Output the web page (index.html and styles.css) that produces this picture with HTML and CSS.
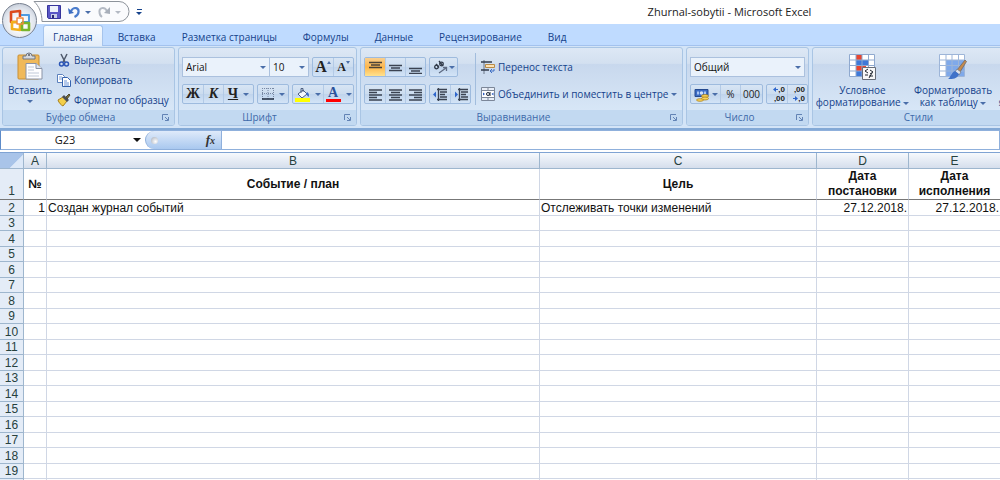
FILE: index.html
```html
<!DOCTYPE html>
<html lang="ru">
<head>
  <meta charset="UTF-8">
  <meta name="viewport" content="width=device-width, initial-scale=1">
  <title>Zhurnal-sobytii - Microsoft Excel</title>
  <link rel="stylesheet" href="styles.css">
</head>
<body>
  <header class="titlebar">
    <button type="button" class="office-btn" aria-label="Office">
      <svg width="24" height="24" viewBox="0 0 24 24" fill="none" stroke-linejoin="round">
        <path d="M9 13H3V3l9-1v6" stroke="#dc4a1c" stroke-width="2.600"/>
        <path d="M13 6h8v7h-7" stroke="#4f9be0" stroke-width="2"/>
        <path d="M9 13H4v7l8 1v-6" stroke="#f3b01c" stroke-width="2.600"/>
        <path d="M14 14h7v7h-7z" stroke="#78b52c" stroke-width="2.600"/>
        <path d="M9 9h6v6H9z" stroke="#f08a3c" stroke-width="1.500"/>
      </svg>
    </button>
    <div class="quick">
      <svg class="quick-shape" width="98" height="22" viewBox="0 0 98 22">
        <path d="M1 .5H86a10 10 0 0 1 0 20H9C9 12 6 5 1 .5z" fill="#fafbfd" stroke="#8d939b"/>
      </svg>
      <button type="button" aria-label="Сохранить">
        <svg width="14" height="14" viewBox="0 0 14 14">
          <path d="M.5.500h13v13h-12l-1-1z" fill="#5a57c6" stroke="#37359b"/>
          <path d="M3 1h8v6H3z" fill="#eef2fb"/>
          <path d="M4 9h6v4H4z" fill="#c9cfe6"/>
          <path d="M5 10h2v3H5z" fill="#2a2875"/>
        </svg>
      </button>
      <button type="button" class="undo" aria-label="Отменить">
        <svg width="12" height="12" viewBox="0 0 12 12" fill="none">
          <path d="M3 5c3-5 8-3 7.500 1 0 2-2 4-4 5" stroke="#4a7ccc" stroke-width="2.200"/>
          <path d="M0 2l1 6 5-1z" fill="#3c6cc0"/>
        </svg>
      </button>
      <span class="caret"></span>
      <button type="button" class="redo" aria-label="Вернуть" disabled>
        <svg width="12" height="12" viewBox="0 0 12 12" fill="none">
          <path d="M9 5C6 0 1 2 1.500 6c0 2 1 4 2.500 5" stroke="#b4bac4" stroke-width="2"/>
          <path d="M12 1v7l-6-1z" fill="#a8afba"/>
        </svg>
      </button>
      <span class="caret caret-off"></span>
    </div>
    <button type="button" class="customize" aria-label="Настройка панели"><span class="caret"></span></button>
    <h1 class="title">Zhurnal-sobytii - Microsoft Excel</h1>
  </header>

  <nav class="tabs">
    <a href="#" class="tab active">Главная</a>
    <a href="#" class="tab">Вставка</a>
    <a href="#" class="tab">Разметка страницы</a>
    <a href="#" class="tab">Формулы</a>
    <a href="#" class="tab">Данные</a>
    <a href="#" class="tab">Рецензирование</a>
    <a href="#" class="tab">Вид</a>
  </nav>

  <div class="ribbon">
    <!-- Clipboard -->
    <section class="group clipboard">
      <div class="group-body">
        <button type="button" class="big">
          <svg width="26" height="28" viewBox="0 0 26 28">
            <rect x="1" y="3" width="21" height="24" rx="1" fill="#f0b95a" stroke="#c98f33"/>
            <path d="M6 7V4h3a3 3 0 0 1 6 0h3v3z" fill="#d5d8de" stroke="#6f7683"/>
            <circle cx="12" cy="3" r="1" fill="#555c68"/>
            <path d="M9 11.500h10l6 5V27H9z" fill="#fdfdff" stroke="#8a93a6"/>
            <path d="M19 11.500v5h6" fill="#dfe5ef" stroke="#8a93a6"/>
            <path d="M11 15h6M11 18h6M11 21h11M11 24h11" stroke="#c0c9d8"/>
          </svg>
          <span>Вставить</span>
          <span class="caret"></span>
        </button>
        <div class="small-list">
          <button type="button" class="small">
            <svg width="14" height="14" viewBox="0 0 14 14" fill="none">
              <path d="M4 1l4 8M10 1L6 9" stroke="#4f5a6b" stroke-width="1.500"/>
              <circle cx="4.500" cy="11" r="2" stroke="#2b55b5" stroke-width="1.500"/>
              <circle cx="9.500" cy="11" r="2" stroke="#2b55b5" stroke-width="1.500"/>
            </svg>
            Вырезать
          </button>
          <button type="button" class="small">
            <svg width="14" height="14" viewBox="0 0 14 14">
              <path d="M.5 1.500h5l2 2v6h-7z" fill="#fff" stroke="#5b80bd"/>
              <path d="M2 4h3M2 6h3" stroke="#7ea0d8"/>
              <path d="M5.500 4.500h5l3 3v6h-8z" fill="#fff" stroke="#3563ae"/>
              <path d="M7 8h3M7 10h5M7 12h5" stroke="#6b93d6"/>
            </svg>
            Копировать
          </button>
          <button type="button" class="small">
            <svg width="14" height="14" viewBox="0 0 14 14">
              <path d="M1 7l5-3 4 4-4 5c-2-1-4-3-5-6z" fill="#f3cf4a" stroke="#a8801c"/>
              <path d="M5 4l2-2 5 5-2 2z" fill="#4a4f58"/>
              <path d="M9 4l3-3 1 1-3 4z" fill="#7d7240" stroke="#4f4a30"/>
            </svg>
            Формат по образцу
          </button>
        </div>
      </div>
      <div class="group-label">Буфер обмена
        <svg class="launcher" width="7" height="7" viewBox="0 0 7 7"><path d="M.5 6V.500H6M3 3l3 3M6.500 3v3.500H3" fill="none" stroke="#6283b5"/></svg>
      </div>
    </section>

    <!-- Font -->
    <section class="group font">
      <div class="group-body rows">
        <div class="row">
          <div class="combo">
            <label class="pick pick-font"><select aria-label="Шрифт"><option>Arial</option></select><span class="caret"></span></label>
            <label class="pick pick-size"><select aria-label="Размер"><option>10</option></select><span class="caret"></span></label>
          </div>
          <div class="set">
            <button type="button" class="serif grow" aria-label="Увеличить размер">A<span class="caret caret-up"></span></button>
            <button type="button" class="serif shrink" aria-label="Уменьшить размер">A<span class="caret"></span></button>
          </div>
        </div>
        <div class="row">
          <div class="set">
            <button type="button" class="serif">Ж</button>
            <button type="button" class="serif italic">К</button>
            <button type="button" class="serif wide"><u>Ч</u><span class="caret"></span></button>
          </div>
          <div class="set">
            <button type="button" class="wide" aria-label="Границы">
              <svg width="12" height="12" viewBox="0 0 12 12" fill="none">
                <path d="M.5 0v11M6 0v11M11.500 0v11M0 .5h12M0 5.500h12" stroke="#7787a3" stroke-dasharray="1 1"/>
                <path d="M0 11h12" stroke="#1e2a3e" stroke-width="1.500"/>
              </svg>
              <span class="caret"></span>
            </button>
          </div>
          <div class="set">
            <button type="button" class="wide" aria-label="Цвет заливки">
              <svg width="15" height="15" viewBox="0 0 15 15">
                <path d="M3 7l5-4 4 4-5 4z" fill="#f5f8fd" stroke="#4c5f80"/>
                <path d="M6 6V1.500h2V5" fill="none" stroke="#4c5f80"/>
                <path d="M12 5c2 1 2.500 3 1.500 5-1-1-1.500-2-2.500-3z" fill="#3e6cc2"/>
                <path d="M0 11h15v4H0z" fill="#ff0"/>
              </svg>
              <span class="caret"></span>
            </button>
            <button type="button" class="wide" aria-label="Цвет текста">
              <span class="serif font-color">A</span>
              <span class="caret"></span>
            </button>
          </div>
        </div>
      </div>
      <div class="group-label">Шрифт
        <svg class="launcher" width="7" height="7" viewBox="0 0 7 7"><path d="M.5 6V.500H6M3 3l3 3M6.500 3v3.500H3" fill="none" stroke="#6283b5"/></svg>
      </div>
    </section>

    <!-- Alignment -->
    <section class="group align">
      <div class="group-body">
        <div class="rows">
          <div class="row">
            <div class="set">
              <button type="button" class="on" aria-label="По верхнему краю"><svg width="13" height="13" viewBox="0 0 13 13"><path d="M0 1.500h13M2 4h9M0 6.500h13" stroke="#4a4238" stroke-width="1.400"/></svg></button>
              <button type="button" aria-label="По середине"><svg width="13" height="13" viewBox="0 0 13 13"><path d="M0 4.500h13M2 7h9M0 9.500h13" stroke="#3b4352" stroke-width="1.400"/></svg></button>
              <button type="button" aria-label="По нижнему краю"><svg width="13" height="13" viewBox="0 0 13 13"><path d="M0 7.500h13M2 10h9M0 12.500h13" stroke="#3b4352" stroke-width="1.400"/></svg></button>
            </div>
            <div class="set">
              <button type="button" class="orient" aria-label="Ориентация">
                <svg width="15" height="14" viewBox="0 0 15 14" fill="none" stroke="#2f3847" stroke-width="1.300">
                  <circle cx="3.500" cy="7" r="1.800"/><path d="M3 4l3 3.500M6 1l4 5"/><circle cx="8.500" cy="4" r="1.800"/>
                  <path d="M6 13l7-5M13.500 11V7.500H10" stroke="#5f6c83"/>
                </svg>
                <span class="caret"></span>
              </button>
            </div>
          </div>
          <div class="row">
            <div class="set">
              <button type="button" aria-label="По левому краю"><svg width="13" height="13" viewBox="0 0 13 13"><path d="M0 2h13M0 4.500h8M0 7h13M0 9.500h8M0 12h13" stroke="#3b4352" stroke-width="1.400"/></svg></button>
              <button type="button" aria-label="По центру"><svg width="13" height="13" viewBox="0 0 13 13"><path d="M0 2h13M2 4.500h9M0 7h13M2 9.500h9M0 12h13" stroke="#3b4352" stroke-width="1.400"/></svg></button>
              <button type="button" aria-label="По правому краю"><svg width="13" height="13" viewBox="0 0 13 13"><path d="M0 2h13M5 4.500h8M0 7h13M5 9.500h8M0 12h13" stroke="#3b4352" stroke-width="1.400"/></svg></button>
            </div>
            <div class="set">
              <button type="button" aria-label="Уменьшить отступ"><svg width="14" height="13" viewBox="0 0 14 13"><path d="M4 1.500h10M7 4h7M7 6.500h5M7 9h7M4 11.500h10M5.500 0v13" stroke="#3b4352" stroke-width="1.300"/><path d="M0 6.500l3-3v6z" fill="#2f66cc"/></svg></button>
              <button type="button" aria-label="Увеличить отступ"><svg width="14" height="13" viewBox="0 0 14 13"><path d="M4 1.500h10M7 4h7M7 6.500h5M7 9h7M4 11.500h10M5.500 0v13" stroke="#3b4352" stroke-width="1.300"/><path d="M4 6.500l-3-3v6z" fill="#2f66cc"/></svg></button>
            </div>
          </div>
        </div>
        <div class="divider"></div>
        <div class="rows">
          <button type="button" class="small">
            <svg width="14" height="14" viewBox="0 0 14 14" fill="none">
              <path d="M3 0v14" stroke="#6b7688"/>
              <path d="M0 2h11M0 10h8" stroke="#333d4e" stroke-width="1.500"/>
              <path d="M4.500 4.500h9v3h-9z" fill="#fbe1b5" stroke="#b98a45"/>
              <path d="M13 9v2h-3M11 9l-2 2 2 2" stroke="#3f6fc4"/>
            </svg>
            Перенос текста
          </button>
          <button type="button" class="small">
            <svg width="14" height="14" viewBox="0 0 14 14" fill="none">
              <path d="M.5.500h13v13H.500z" fill="#e8eef8" stroke="#7c8799"/>
              <path d="M0 3.500h14M0 10.500h14M7 0v3M7 11v3" stroke="#7c8799"/>
              <path d="M1 4h12v6H1z" fill="#fff"/>
              <circle cx="7" cy="7" r="1.500" stroke="#222c3d"/><path d="M9 5v4" stroke="#222c3d"/>
              <path d="M4 7L2 5.500v3zM10.500 7l2-1.500v3z" fill="#2b5cc0"/>
            </svg>
            Объединить и поместить в центре
            <span class="caret"></span>
          </button>
        </div>
      </div>
      <div class="group-label">Выравнивание
        <svg class="launcher" width="7" height="7" viewBox="0 0 7 7"><path d="M.5 6V.500H6M3 3l3 3M6.500 3v3.500H3" fill="none" stroke="#6283b5"/></svg>
      </div>
    </section>

    <!-- Number -->
    <section class="group number">
      <div class="group-body rows">
        <div class="row">
          <label class="pick"><select aria-label="Числовой формат"><option>Общий</option></select><span class="caret"></span></label>
        </div>
        <div class="row">
          <div class="set">
            <button type="button" class="money" aria-label="Денежный формат">
              <svg width="15" height="15" viewBox="0 0 15 15">
                <path d="M1 2.500h13v7H1z" fill="#3a6bc4" stroke="#24498f"/>
                <path d="M3 4.500h2v3H3zM10 4.500h2v3h-2z" fill="#a9c6f5"/>
                <circle cx="7.500" cy="6" r="1.800" fill="#cfe0fb"/>
                <ellipse cx="11" cy="9" rx="3.500" ry="1.500" fill="#f8d35b" stroke="#a67a17" stroke-width=".7"/>
                <ellipse cx="11" cy="11.500" rx="3.500" ry="1.500" fill="#f8d35b" stroke="#a67a17" stroke-width=".7"/>
                <ellipse cx="6" cy="13" rx="3.500" ry="1.300" fill="#f8d35b" stroke="#a67a17" stroke-width=".7"/>
              </svg>
              <span class="caret"></span>
            </button>
            <button type="button">%</button>
            <button type="button" class="thousands">000</button>
          </div>
          <div class="set">
            <button type="button" class="digits">
              <span><svg width="5" height="5" viewBox="0 0 5 5"><path d="M0 2.500L3 0v2h2v1H3v2z" fill="#2f66cc"/></svg>,0</span>
              <span>,00</span>
            </button>
            <button type="button" class="digits">
              <span>,00</span>
              <span><svg width="5" height="5" viewBox="0 0 5 5"><path d="M5 2.500L2 0v2H0v1h2v2z" fill="#2f66cc"/></svg>,0</span>
            </button>
          </div>
        </div>
      </div>
      <div class="group-label">Число
        <svg class="launcher" width="7" height="7" viewBox="0 0 7 7"><path d="M.5 6V.500H6M3 3l3 3M6.500 3v3.500H3" fill="none" stroke="#6283b5"/></svg>
      </div>
    </section>

    <!-- Styles -->
    <section class="group styles">
      <div class="group-body">
        <button type="button" class="big">
          <svg width="27" height="28" viewBox="0 0 27 28">
            <path d="M.5 2.500h25v22H.500z" fill="#fff"/>
            <path d="M7 3h6v5H7zM7 14h10v5H7z" fill="#e8452f"/>
            <path d="M7 8h12v6H7zM7 19h6v6H7z" fill="#3f79d8"/>
            <path d="M.5 2.500h25v22H.500zM0 8h26M0 13.500h26M0 19h26M7 2v23M13 2v23M19.500 2v23" fill="none" stroke="#8fa9cf"/>
            <path d="M13.500 15.500h13v12h-13z" fill="#f8f8f8" stroke="#666d78"/>
            <path d="M19 17l-3 2 3 2M16 23h3M21 18l3 2-3 2M20 24h4M23 21l-3 5" fill="none" stroke="#20262f"/>
          </svg>
          <span>Условное<br>форматирование <span class="caret"></span></span>
        </button>
        <button type="button" class="big">
          <svg width="28" height="28" viewBox="0 0 28 28">
            <path d="M.5 2.500h25v22H.500z" fill="#fff"/>
            <path d="M7 8h18v16H7z" fill="#7fa9ea"/>
            <path d="M.5 2.500h25v22H.500zM0 8h26M0 13.500h26M0 19h26M7 2v23M13 2v23M19.500 2v23" fill="none" stroke="#9db5d8"/>
            <path d="M26 8l1.500 1.500L21 20l-3-2z" fill="#c58a4c" stroke="#6e6a68" stroke-width=".8"/>
            <path d="M18 17l4 3-2 3-4-3z" fill="#dfe3ea" stroke="#747b88" stroke-width=".8"/>
            <path d="M16 19l4 3c-2 5-6 5-11 5 3-2 3-6 7-8z" fill="#3f72c9"/>
          </svg>
          <span>Форматировать<br>как таблицу <span class="caret"></span></span>
        </button>
        <button type="button" class="big">
          <svg width="26" height="28" viewBox="0 0 26 28"><path d="M4 3h21v22H4z" fill="#7fa9ea"/></svg>
          <span>Стили<br>ячеек <span class="caret"></span></span>
        </button>
      </div>
      <div class="group-label">Стили</div>
    </section>
  </div>

  <div class="formula-bar">
    <label class="name-box"><input type="text" value="G23" aria-label="Имя"><span class="caret"></span></label>
    <div class="fx"><span class="knob"></span><button type="button"><i>f<sub>x</sub></i></button></div>
    <input type="text" class="formula" aria-label="Строка формул">
  </div>

  <main class="sheet">
    <table>
      <colgroup>
        <col class="col-head"><col class="col-a"><col class="col-b"><col><col class="col-date"><col class="col-last">
      </colgroup>
      <thead>
        <tr><th class="corner"></th><th>A</th><th>B</th><th>C</th><th>D</th><th>E</th></tr>
      </thead>
      <tbody>
        <tr class="heading"><th>1</th><td>№</td><td>Событие / план</td><td>Цель</td><td>Дата постановки</td><td>Дата исполнения</td></tr>
        <tr><th>2</th><td class="right">1</td><td>Создан журнал событий</td><td>Отслеживать точки изменений</td><td class="right">27.12.2018.</td><td class="right">27.12.2018.</td></tr>
        <tr><th>3</th><td></td><td></td><td></td><td></td><td></td></tr>
        <tr><th>4</th><td></td><td></td><td></td><td></td><td></td></tr>
        <tr><th>5</th><td></td><td></td><td></td><td></td><td></td></tr>
        <tr><th>6</th><td></td><td></td><td></td><td></td><td></td></tr>
        <tr><th>7</th><td></td><td></td><td></td><td></td><td></td></tr>
        <tr><th>8</th><td></td><td></td><td></td><td></td><td></td></tr>
        <tr><th>9</th><td></td><td></td><td></td><td></td><td></td></tr>
        <tr><th>10</th><td></td><td></td><td></td><td></td><td></td></tr>
        <tr><th>11</th><td></td><td></td><td></td><td></td><td></td></tr>
        <tr><th>12</th><td></td><td></td><td></td><td></td><td></td></tr>
        <tr><th>13</th><td></td><td></td><td></td><td></td><td></td></tr>
        <tr><th>14</th><td></td><td></td><td></td><td></td><td></td></tr>
        <tr><th>15</th><td></td><td></td><td></td><td></td><td></td></tr>
        <tr><th>16</th><td></td><td></td><td></td><td></td><td></td></tr>
        <tr><th>17</th><td></td><td></td><td></td><td></td><td></td></tr>
        <tr><th>18</th><td></td><td></td><td></td><td></td><td></td></tr>
        <tr><th>19</th><td></td><td></td><td></td><td></td><td></td></tr>
        <tr><th></th><td></td><td></td><td></td><td></td><td></td></tr>
      </tbody>
    </table>
  </main>
</body>
</html>
```
FILE: styles.css
```css
* {
  box-sizing: border-box;
}
body {
  margin: 0;
  height: 100vh;
  display: flex;
  flex-direction: column;
  overflow: hidden;
  background: #fff;
  color: #15428b;
  font: 500 10px/12px "Open Sans", "Noto Sans", sans-serif;
}
button, input, select {
  margin: 0;
  padding: 0;
  border: 0;
  background: none;
  color: inherit;
  font: inherit;
}
button {
  display: flex;
  align-items: center;
  justify-content: center;
  white-space: nowrap;
}
svg {
  flex: none;
  display: block;
}
.caret {
  display: inline-block;
  flex: none;
  border: 3px solid transparent;
  border-top-color: #4a6ea9;
  border-bottom: 0;
}
.caret-up {
  border-top: 0;
  border-bottom: 3px solid #4a6ea9;
}
.caret-off {
  border-top-color: #b4bac4;
}

/* title bar */
.titlebar {
  position: relative;
  display: flex;
  align-items: center;
  height: 24px;
  padding-left: 33px;
}
.office-btn {
  position: absolute;
  z-index: 2;
  left: 2px;
  top: 3px;
  width: 35px;
  height: 35px;
  border: 1px solid #77808f;
  border-radius: 50%;
  background: radial-gradient(circle at 50% 60%, #fff 20%, #dfe4ec 60%, #a9b3c4);
}
.quick {
  position: relative;
  display: flex;
  align-items: center;
  width: 98px;
  height: 22px;
  padding-left: 14px;
}
.quick-shape {
  position: absolute;
  left: 0;
  top: 0;
}
.quick button, .quick .caret {
  position: relative;
}
.undo, .redo {
  margin: 0 5px 0 7px;
}
.customize {
  width: 16px;
  flex-direction: column;
  gap: 2px;
}
.customize::before {
  content: "";
  width: 5px;
  height: 1px;
  background: #15428b;
}
.customize .caret {
  border-top-color: #15428b;
}
.title {
  flex: 1;
  margin: 0;
  padding-left: 312px;
  text-align: center;
  color: #222;
  font-size: 11px;
  font-weight: normal;
}

/* tabs */
.tabs {
  display: flex;
  height: 22px;
  padding-left: 43px;
  background: #bfdbff;
  border-bottom: 1px solid #a3c2ee;
}
.tab {
  padding: 6px 12px 0;
  border: 1px solid transparent;
  border-bottom: 0;
  color: #15428b;
  text-decoration: none;
}
.tab.active {
  margin: 1px 2px -1px 0;
  padding: 5px 9px 0;
  border-color: #a6c4ec;
  border-radius: 3px 3px 0 0;
  background: linear-gradient(#f5faff, #e3edf9);
}

/* ribbon */
.ribbon {
  display: flex;
  gap: 3px;
  padding: 1px 0 2px 2px;
  overflow: hidden;
  background: #d3e4f7;
  border-bottom: 2px solid #83a9d6;
}
.group {
  flex: none;
  border: 1px solid #a9c5e4;
  border-radius: 3px;
  background: linear-gradient(#dde8f5, #d3e0f0 20%, #c8d8ed 21%, #dcebfa);
  overflow: hidden;
}
.clipboard {
  width: 173px;
}
.font {
  width: 179px;
}
.align {
  width: 323px;
}
.number {
  width: 123px;
}
.styles {
  width: 229px;
}
.group-body {
  display: flex;
  height: 62px;
  padding: 0 3px;
}
.rows {
  display: flex;
  flex-direction: column;
  gap: 7px;
  padding-top: 9px;
}
.row {
  display: flex;
  align-items: center;
  gap: 3px;
  height: 20px;
}
.group-label {
  position: relative;
  height: 15px;
  padding: 1px 16px 0 0;
  background: #c2d9f1;
  color: #3e6aaa;
  text-align: center;
}
.launcher {
  position: absolute;
  right: 5px;
  top: 4px;
}
.big {
  flex-direction: column;
  justify-content: flex-start;
  min-width: 48px;
  padding-top: 4px;
  gap: 4px;
}
.styles .big {
  min-width: 88px;
}
.styles .big:last-child {
  min-width: 40px;
}
.big .caret {
  vertical-align: middle;
}
.small-list {
  display: flex;
  flex-direction: column;
  padding: 2px 0 0 3px;
}
.small {
  justify-content: flex-start;
  gap: 3px;
  height: 20px;
}
.set {
  display: flex;
  height: 20px;
  border: 1px solid #9ebbde;
  border-radius: 2px;
  background: linear-gradient(#d8e5f4, #cbdcef 50%, #c0d4ec 51%, #d3e4f7);
}
.set button {
  width: 20px;
}
.set button + button {
  border-left: 1px solid #b3cae6;
}
.set .wide {
  width: 30px;
  gap: 5px;
}
.set .on {
  background: linear-gradient(#f9cf8e, #fdb64c 50%, #ffe28f);
}
.set .orient {
  width: 27px;
  gap: 1px;
}
.divider {
  width: 1px;
  height: 52px;
  margin: 5px 5px 0 4px;
  background: #a2bddd;
}
.combo {
  display: flex;
}
.pick {
  flex: 1;
  display: flex;
  align-items: center;
  height: 20px;
  padding: 0 3px;
  border: 1px solid #abc1de;
  background: #eaf2fb;
  color: #111;
}
.pick select {
  flex: 1;
  min-width: 0;
  appearance: none;
}
.pick-font {
  flex: none;
  width: 88px;
}
.pick-size {
  flex: none;
  width: 39px;
  border-left: 0;
}
.serif {
  color: #222;
  font-family: "Liberation Serif", serif;
  font-size: 14px;
  font-weight: bold;
}
.italic {
  font-style: italic;
}
.grow {
  font-size: 16px;
}
.shrink {
  font-size: 12px;
}
.grow .caret, .shrink .caret {
  margin-bottom: 9px;
  border-left-width: 2px;
  border-right-width: 2px;
}
.font-color {
  width: 15px;
  color: #2c529b;
  border-bottom: 3px solid #f00;
}
.number .set {
  color: #222;
}
.set .money {
  width: 29px;
  gap: 3px;
}
.set .thousands {
  width: 22px;
}
.set .digits {
  flex-direction: column;
  align-items: flex-end;
  padding-right: 2px;
  font: bold 8px/9px "Liberation Sans", Arial, sans-serif;
}
.digits span {
  display: flex;
  align-items: center;
}

/* formula bar */
.formula-bar {
  display: flex;
  height: 20px;
  border: 1px solid #8fb0dc;
  border-left-color: #5d8bc9;
  background: #fff;
}
.name-box {
  display: flex;
  align-items: center;
  width: 144px;
  padding-right: 4px;
  color: #111;
  font-size: 11px;
}
.name-box input {
  flex: 1;
  min-width: 0;
  padding-right: 4px;
  text-align: center;
}
.name-box .caret {
  border-width: 4px;
  border-bottom: 0;
  border-top-color: #111;
}
.fx {
  display: flex;
  align-items: center;
  justify-content: space-between;
  width: 77px;
  padding: 0 6px 0 5px;
  border: 1px solid #8fb0dc;
  border-width: 0 1px;
  border-radius: 10px 0 0 10px;
  background: linear-gradient(#dfeafa, #a9c8ef);
  color: #333;
  font: bold 13px "Liberation Serif", serif;
}
.fx sub {
  font-size: 10px;
  vertical-align: baseline;
}
.knob {
  width: 7px;
  height: 7px;
  border-radius: 50%;
  background: radial-gradient(circle at 65% 65%, #fff, #a5acb8);
}
.formula {
  flex: 1;
  min-width: 0;
}

/* worksheet */
.sheet {
  flex: 1;
  min-height: 0;
  margin-top: 2px;
  overflow: hidden;
  border-top: 1px solid #7fa3d3;
  color: #111;
  font: 12px/14px "Liberation Sans", Arial, sans-serif;
}
table {
  width: 100%;
  table-layout: fixed;
  border-spacing: 0;
}
.col-head {
  width: 24px;
}
.col-a {
  width: 23px;
}
.col-b {
  width: 493px;
}
.col-date {
  width: 92px;
}
.col-last {
  width: 91px;
}
th, td {
  height: 16px;
  padding: 0 1px;
  border-right: 1px solid #d0d7e5;
  border-bottom: 1px solid #d0d7e5;
  text-align: left;
  white-space: nowrap;
}
tbody tr:nth-child(odd) > * {
  height: 15px;
}
th {
  border-color: #9eb6ce;
  background: #e4ecf7;
  color: #27413e;
  font-weight: normal;
  text-align: center;
}
tr > :last-child {
  border-right: 0;
}
thead th {
  background: linear-gradient(#f6f9fd, #d5deec);
}
thead .corner {
  background: linear-gradient(135deg, #a9c4e9 65%, #dce8f8 66%);
}
.heading > * {
  line-height: 15px;
  text-align: center;
  white-space: normal;
  border-bottom-color: #777;
}
.heading td {
  font-weight: bold;
}
.heading th {
  vertical-align: bottom;
}
.right {
  text-align: right;
}
```
